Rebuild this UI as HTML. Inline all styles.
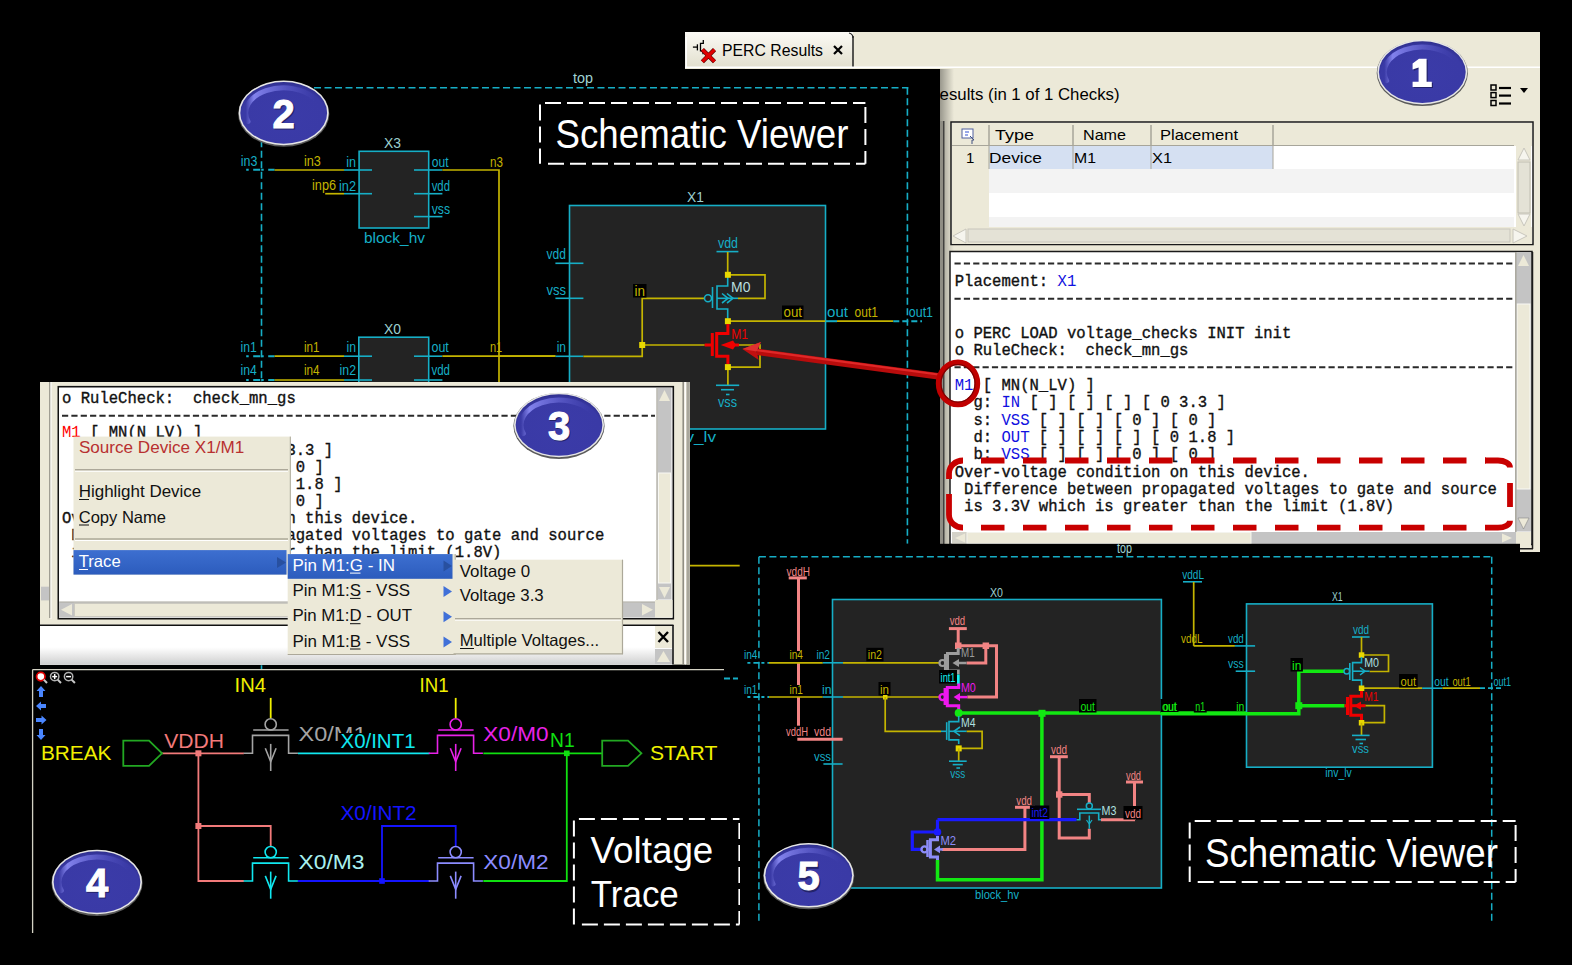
<!DOCTYPE html>
<html><head><meta charset="utf-8"><title>PERC</title>
<style>
html,body{margin:0;padding:0;background:#000;width:1572px;height:965px;overflow:hidden}
svg{display:block;font-family:'Liberation Sans',sans-serif}
</style></head><body>
<svg width="1572" height="965" viewBox="0 0 1572 965">
<defs>
<radialGradient id="bg1" cx="0.5" cy="0.55" r="0.6">
 <stop offset="0" stop-color="#3b3ba8"/><stop offset="0.8" stop-color="#3a3aa6"/><stop offset="1" stop-color="#26267a"/>
</radialGradient>
<linearGradient id="hlh" x1="0" y1="0" x2="1" y2="0">
 <stop offset="0" stop-color="#8a8af0" stop-opacity="0.0"/><stop offset="0.12" stop-color="#8a8af4" stop-opacity="0.9"/><stop offset="0.45" stop-color="#7c7ce8" stop-opacity="0.6"/><stop offset="1" stop-color="#6060d0" stop-opacity="0"/>
</linearGradient>
<linearGradient id="hl" x1="0" y1="0" x2="0" y2="1">
 <stop offset="0" stop-color="#9090ff" stop-opacity="0.9"/><stop offset="1" stop-color="#6a6ae0" stop-opacity="0"/>
</linearGradient>
<linearGradient id="shadowL" x1="0" y1="0" x2="1" y2="0">
 <stop offset="0" stop-color="#000" stop-opacity="0.35"/><stop offset="1" stop-color="#000" stop-opacity="0"/>
</linearGradient>
<linearGradient id="tabg" x1="0" y1="0" x2="0" y2="1">
 <stop offset="0" stop-color="#fbfaf5"/><stop offset="1" stop-color="#e2dfcd"/>
</linearGradient>
<linearGradient id="menuSel" x1="0" y1="0" x2="0" y2="1">
 <stop offset="0" stop-color="#3d6fd0"/><stop offset="1" stop-color="#2c5cbd"/>
</linearGradient>
</defs>
<rect x="0" y="0" width="1572" height="965" fill="#000"/>
<rect x="685" y="32" width="855" height="520" fill="#ece9d8"/>
<rect x="685" y="32" width="168" height="36" fill="url(#tabg)"/>
<line x1="853" y1="36" x2="853" y2="68" stroke="#222" stroke-width="1.5"/>
<path d="M849 33 Q853 34 853 38" stroke="#222" stroke-width="1.2" fill="none"/>
<line x1="685" y1="67.3" x2="1540" y2="67.3" stroke="#fff" stroke-width="1.5"/>
<line x1="692.9" y1="47.1" x2="697.4" y2="47.1" stroke="#000" stroke-width="1.3"/>
<line x1="697.4" y1="44.3" x2="697.4" y2="50.4" stroke="#000" stroke-width="1.3"/>
<polyline points="703.3,40.1 703.3,43.4 700.5,43.4 700.5,50.8 703,50.8 703,54.3" stroke="#000" stroke-width="1.3" fill="none"/>
<path d="M702.4 49.6 L714.5 61.7 M714.5 49.6 L702.4 61.7" stroke="#500" stroke-width="4.4" fill="none"/>
<path d="M702.4 49.6 L714.5 61.7 M714.5 49.6 L702.4 61.7" stroke="#e00000" stroke-width="3.2" fill="none"/>
<line x1="686.2" y1="37" x2="686.2" y2="68" stroke="#fff" stroke-width="1.5"/>
<text x="722" y="56" fill="#000" font-size="16" textLength="101" lengthAdjust="spacingAndGlyphs">PERC Results</text>
<path d="M834 46 L842 54 M842 46 L834 54" stroke="#000" stroke-width="2.2" fill="none"/>
<text x="927.5" y="100" fill="#000" font-size="16" textLength="192" lengthAdjust="spacingAndGlyphs">Results (in 1 of 1 Checks)</text>
<rect x="1491" y="85" width="5" height="5" fill="none" stroke="#000" stroke-width="1.5"/>
<line x1="1499" y1="88" x2="1511" y2="88" stroke="#000" stroke-width="2.2"/>
<rect x="1491" y="92.6" width="5" height="5" fill="none" stroke="#000" stroke-width="1.5"/>
<line x1="1499" y1="95.6" x2="1511" y2="95.6" stroke="#000" stroke-width="2.2"/>
<rect x="1491" y="100.5" width="5" height="5" fill="none" stroke="#000" stroke-width="1.5"/>
<line x1="1499" y1="103.5" x2="1511" y2="103.5" stroke="#000" stroke-width="2.2"/>
<path d="M1520 88 L1528 88 L1524 93 Z" stroke="none" stroke-width="1" fill="#000"/>
<rect x="940" y="69" width="14" height="483" fill="url(#shadowL)"/>
<linearGradient id="shadowT" x1="0" y1="1" x2="0" y2="0"><stop offset="0" stop-color="#000" stop-opacity="0.22"/><stop offset="1" stop-color="#000" stop-opacity="0"/></linearGradient>
<rect x="940" y="121" width="3.3" height="428" fill="#8f8d84"/>
<line x1="943.8" y1="121" x2="943.8" y2="549" stroke="#2a2a2a" stroke-width="1.2"/>
<rect x="951" y="122" width="582" height="122.5" fill="#fff" stroke="#1a1a1a" stroke-width="1.5"/>
<rect x="952" y="123" width="580" height="23" fill="#ece9d8"/>
<rect x="952" y="146" width="37" height="81" fill="#ece9d8"/>
<rect x="989" y="146" width="284" height="23" fill="#d5e0f2"/>
<rect x="989" y="169" width="525" height="24" fill="#f3f3f3"/>
<rect x="989" y="217" width="525" height="10" fill="#f3f3f3"/>
<line x1="989" y1="125" x2="989" y2="145" stroke="#a7a59a" stroke-width="1.5"/>
<line x1="989" y1="146" x2="989" y2="169" stroke="#a7a59a" stroke-width="1"/>
<line x1="1073" y1="125" x2="1073" y2="145" stroke="#a7a59a" stroke-width="1.5"/>
<line x1="1073" y1="146" x2="1073" y2="169" stroke="#a7a59a" stroke-width="1"/>
<line x1="1151" y1="125" x2="1151" y2="145" stroke="#a7a59a" stroke-width="1.5"/>
<line x1="1151" y1="146" x2="1151" y2="169" stroke="#a7a59a" stroke-width="1"/>
<line x1="1273" y1="125" x2="1273" y2="145" stroke="#a7a59a" stroke-width="1.5"/>
<line x1="1273" y1="146" x2="1273" y2="169" stroke="#a7a59a" stroke-width="1"/>
<line x1="952" y1="145.5" x2="1514" y2="145.5" stroke="#a7a59a" stroke-width="1"/>
<rect x="962" y="129" width="11" height="9" fill="#fff" stroke="#5060a0" stroke-width="1"/>
<path d="M965 132 l4 0 M965 135 l3 0" stroke="#3050d0" stroke-width="1" fill="none"/>
<path d="M970 136 l4 4 l-2 0 l0 4" stroke="#405080" stroke-width="1" fill="none"/>
<text x="995" y="140" fill="#000" font-size="15" textLength="39" lengthAdjust="spacingAndGlyphs">Type</text>
<text x="1083" y="140" fill="#000" font-size="15" textLength="43" lengthAdjust="spacingAndGlyphs">Name</text>
<text x="1160" y="140" fill="#000" font-size="15" textLength="78" lengthAdjust="spacingAndGlyphs">Placement</text>
<text x="966" y="163" fill="#000" font-size="15">1</text>
<text x="989" y="163" fill="#000" font-size="15" textLength="53" lengthAdjust="spacingAndGlyphs">Device</text>
<text x="1074" y="163" fill="#000" font-size="15" textLength="22" lengthAdjust="spacingAndGlyphs">M1</text>
<text x="1152" y="163" fill="#000" font-size="15" textLength="20" lengthAdjust="spacingAndGlyphs">X1</text>
<rect x="1516" y="146" width="15" height="81" fill="#ece9d8"/>
<path d="M1518 160 L1524 148 L1530 160 Z" stroke="#c8c6bc" stroke-width="1" fill="#f6f5ee"/>
<rect x="1518" y="162" width="12" height="51" fill="#e4e2d6" stroke="#c0beb2" stroke-width="1"/>
<path d="M1518 214 L1524 226 L1530 214 Z" stroke="#c8c6bc" stroke-width="1" fill="#f6f5ee"/>
<rect x="952" y="227" width="580" height="17" fill="#ece9d8"/>
<path d="M953 236 L966 229 L966 243 Z" stroke="#c8c6bc" stroke-width="1" fill="#f6f5ee"/>
<rect x="968" y="229" width="542" height="13" fill="#e4e2d6" stroke="#c8c6bc" stroke-width="1"/>
<path d="M1513 229 L1527 236 L1513 243 Z" stroke="#c8c6bc" stroke-width="1" fill="#f6f5ee"/>
<rect x="950" y="251.5" width="582" height="293" fill="#fff" stroke="#1a1a1a" stroke-width="1.5"/>
<rect x="952" y="253" width="564" height="279" fill="#fff"/>
<line x1="954.5" y1="263.5" x2="1514" y2="263.5" stroke="#2a2a2a" stroke-width="1.9" stroke-dasharray="6.2 3.15"/>
<text x="954.7" y="286" fill="#111" font-size="15.6" font-family="'Liberation Mono', monospace" textLength="121.55" lengthAdjust="spacingAndGlyphs" xml:space="preserve" stroke="#111" stroke-width="0.35">Placement: X1</text>
<rect x="1057.55" y="274" width="18.7" height="15" fill="#fff"/>
<text x="1057.55" y="286" fill="#1010e0" font-size="15.6" font-family="'Liberation Mono', monospace" textLength="18.7" lengthAdjust="spacingAndGlyphs">X1</text>
<line x1="954.5" y1="298.8" x2="1514" y2="298.8" stroke="#2a2a2a" stroke-width="1.9" stroke-dasharray="6.2 3.15"/>
<text x="954.7" y="338.3" fill="#111" font-size="15.6" font-family="'Liberation Mono', monospace" textLength="336.6" lengthAdjust="spacingAndGlyphs" xml:space="preserve" stroke="#111" stroke-width="0.35">o PERC LOAD voltage_checks INIT init</text>
<text x="954.7" y="355.4" fill="#111" font-size="15.6" font-family="'Liberation Mono', monospace" textLength="233.75" lengthAdjust="spacingAndGlyphs" xml:space="preserve" stroke="#111" stroke-width="0.35">o RuleCheck:  check_mn_gs</text>
<line x1="954.5" y1="367.3" x2="1514" y2="367.3" stroke="#2a2a2a" stroke-width="1.9" stroke-dasharray="6.2 3.15"/>
<text x="954.7" y="389.7" fill="#111" font-size="15.6" font-family="'Liberation Mono', monospace" textLength="140.25" lengthAdjust="spacingAndGlyphs" xml:space="preserve" stroke="#111" stroke-width="0.35">M1 [ MN(N_LV) ]</text>
<rect x="954.7" y="377.7" width="18.7" height="15" fill="#fff"/>
<text x="954.7" y="389.7" fill="#1010e0" font-size="15.6" font-family="'Liberation Mono', monospace" textLength="18.7" lengthAdjust="spacingAndGlyphs">M1</text>
<text x="954.7" y="407.4" fill="#111" font-size="15.6" font-family="'Liberation Mono', monospace" textLength="271.15" lengthAdjust="spacingAndGlyphs" xml:space="preserve" stroke="#111" stroke-width="0.35">  g: IN [ ] [ ] [ ] [ 0 3.3 ]</text>
<rect x="1001.45" y="395.4" width="18.7" height="15" fill="#fff"/>
<text x="1001.45" y="407.4" fill="#1010e0" font-size="15.6" font-family="'Liberation Mono', monospace" textLength="18.7" lengthAdjust="spacingAndGlyphs">IN</text>
<text x="954.7" y="425" fill="#111" font-size="15.6" font-family="'Liberation Mono', monospace" textLength="261.8" lengthAdjust="spacingAndGlyphs" xml:space="preserve" stroke="#111" stroke-width="0.35">  s: VSS [ ] [ ] [ 0 ] [ 0 ]</text>
<rect x="1001.45" y="413" width="28.049999999999997" height="15" fill="#fff"/>
<text x="1001.45" y="425" fill="#1010e0" font-size="15.6" font-family="'Liberation Mono', monospace" textLength="28.05" lengthAdjust="spacingAndGlyphs">VSS</text>
<text x="954.7" y="441.8" fill="#111" font-size="15.6" font-family="'Liberation Mono', monospace" textLength="280.5" lengthAdjust="spacingAndGlyphs" xml:space="preserve" stroke="#111" stroke-width="0.35">  d: OUT [ ] [ ] [ ] [ 0 1.8 ]</text>
<rect x="1001.45" y="429.8" width="28.049999999999997" height="15" fill="#fff"/>
<text x="1001.45" y="441.8" fill="#1010e0" font-size="15.6" font-family="'Liberation Mono', monospace" textLength="28.05" lengthAdjust="spacingAndGlyphs">OUT</text>
<text x="954.7" y="458.8" fill="#111" font-size="15.6" font-family="'Liberation Mono', monospace" textLength="261.8" lengthAdjust="spacingAndGlyphs" xml:space="preserve" stroke="#111" stroke-width="0.35">  b: VSS [ ] [ ] [ 0 ] [ 0 ]</text>
<rect x="1001.45" y="446.8" width="28.049999999999997" height="15" fill="#fff"/>
<text x="1001.45" y="458.8" fill="#1010e0" font-size="15.6" font-family="'Liberation Mono', monospace" textLength="28.05" lengthAdjust="spacingAndGlyphs">VSS</text>
<text x="954.7" y="476.5" fill="#111" font-size="15.6" font-family="'Liberation Mono', monospace" textLength="355.3" lengthAdjust="spacingAndGlyphs" xml:space="preserve" stroke="#111" stroke-width="0.35">Over-voltage condition on this device.</text>
<text x="954.7" y="494" fill="#111" font-size="15.6" font-family="'Liberation Mono', monospace" textLength="542.3" lengthAdjust="spacingAndGlyphs" xml:space="preserve" stroke="#111" stroke-width="0.35"> Difference between propagated voltages to gate and source</text>
<text x="954.7" y="511" fill="#111" font-size="15.6" font-family="'Liberation Mono', monospace" textLength="439.45" lengthAdjust="spacingAndGlyphs" xml:space="preserve" stroke="#111" stroke-width="0.35"> is 3.3V which is greater than the limit (1.8V)</text>
<rect x="1516" y="252.5" width="15" height="279" fill="#c4c4c4"/>
<rect x="1517" y="304" width="13" height="185" fill="#ece9d8" stroke="#f8f8f4" stroke-width="1"/>
<path d="M1518 266 L1523.5 255 L1529 266 Z" stroke="none" stroke-width="1" fill="#ece9d8"/>
<path d="M1518 518 L1523.5 529 L1529 518 Z" stroke="#888" stroke-width="0.6" fill="#ece9d8"/>
<line x1="1515.8" y1="252" x2="1515.8" y2="532" stroke="#a8a69c" stroke-width="1.5"/>
<rect x="952" y="532" width="564" height="12" fill="#c4c4c4"/>
<rect x="952" y="532" width="15" height="12" fill="#d4d2c8"/>
<path d="M965 533.5 L955 538 L965 542.5 Z" stroke="none" stroke-width="1" fill="#ece9d8"/>
<rect x="967" y="532.5" width="284" height="11" fill="#ece9d8" stroke="#f4f4ee" stroke-width="1"/>
<path d="M1502 533.5 L1512 538 L1502 542.5 Z" stroke="none" stroke-width="1" fill="#ece9d8"/>
<rect x="1516" y="532" width="15" height="16" fill="#ece9d8"/>
<line x1="1532.5" y1="252" x2="1532.5" y2="549" stroke="#1a1a1a" stroke-width="1.5"/>
<line x1="950" y1="548.8" x2="1533" y2="548.8" stroke="#1a1a1a" stroke-width="1.5"/>
<rect x="0" y="69" width="940" height="483" fill="#000"/>
<text x="573" y="83" fill="#9fd3d3" font-size="14" textLength="20" lengthAdjust="spacingAndGlyphs">top</text>
<line x1="261.5" y1="87.8" x2="908.4" y2="87.8" stroke="#16aec6" stroke-width="1.6" stroke-dasharray="7 3.5"/>
<line x1="261.5" y1="87.8" x2="261.5" y2="669" stroke="#16aec6" stroke-width="1.6" stroke-dasharray="7 3.5"/>
<line x1="907.4" y1="87.8" x2="907.4" y2="543.7" stroke="#16aec6" stroke-width="1.6" stroke-dasharray="7 3.5"/>
<rect x="359.1" y="151.3" width="69.6" height="76.7" fill="#232323" stroke="#16aec6" stroke-width="1.6"/>
<text x="384" y="147.7" fill="#9cd0d0" font-size="14" textLength="17" lengthAdjust="spacingAndGlyphs">X3</text>
<text x="364" y="242.5" fill="#16aec6" font-size="14" textLength="61" lengthAdjust="spacingAndGlyphs">block_hv</text>
<line x1="344" y1="170" x2="372" y2="170" stroke="#16aec6" stroke-width="1.6"/>
<line x1="344" y1="193.7" x2="372" y2="193.7" stroke="#16aec6" stroke-width="1.6"/>
<line x1="414" y1="170" x2="442.4" y2="170" stroke="#16aec6" stroke-width="1.6"/>
<line x1="414" y1="193.7" x2="442.4" y2="193.7" stroke="#16aec6" stroke-width="1.6"/>
<line x1="414" y1="216.6" x2="442.4" y2="216.6" stroke="#16aec6" stroke-width="1.6"/>
<text x="346.2" y="167.1" fill="#16aec6" font-size="14" textLength="9.8" lengthAdjust="spacingAndGlyphs">in</text>
<text x="339" y="191" fill="#16aec6" font-size="14" textLength="17" lengthAdjust="spacingAndGlyphs">in2</text>
<text x="431.7" y="167.1" fill="#16aec6" font-size="14" textLength="16.8" lengthAdjust="spacingAndGlyphs">out</text>
<text x="431.7" y="191" fill="#16aec6" font-size="14" textLength="18.3" lengthAdjust="spacingAndGlyphs">vdd</text>
<text x="431.7" y="213.7" fill="#16aec6" font-size="14" textLength="18.3" lengthAdjust="spacingAndGlyphs">vss</text>
<text x="240.8" y="165.7" fill="#16aec6" font-size="14" textLength="16.6" lengthAdjust="spacingAndGlyphs">in3</text>
<line x1="246.2" y1="169.8" x2="274.6" y2="169.8" stroke="#16aec6" stroke-width="2" stroke-dasharray="2.5 4.5 7 1"/>
<line x1="274.6" y1="170" x2="344" y2="170" stroke="#c4b400" stroke-width="1.7"/>
<text x="303.9" y="166" fill="#c4b400" font-size="14" textLength="16.9" lengthAdjust="spacingAndGlyphs">in3</text>
<text x="312" y="190.3" fill="#c4b400" font-size="14" textLength="24" lengthAdjust="spacingAndGlyphs">inp6</text>
<line x1="325.2" y1="193.7" x2="344" y2="193.7" stroke="#c4b400" stroke-width="1.7"/>
<polyline points="442.4,170 499,170 499,400" stroke="#c4b400" stroke-width="1.7" fill="none"/>
<text x="490" y="167" fill="#c4b400" font-size="14" textLength="12.9" lengthAdjust="spacingAndGlyphs">n3</text>
<rect x="358.8" y="337.2" width="69.9" height="80" fill="#232323" stroke="#16aec6" stroke-width="1.6"/>
<text x="384" y="334" fill="#9cd0d0" font-size="14" textLength="17" lengthAdjust="spacingAndGlyphs">X0</text>
<text x="240.5" y="351.9" fill="#16aec6" font-size="14" textLength="16.3" lengthAdjust="spacingAndGlyphs">in1</text>
<text x="240.5" y="375" fill="#16aec6" font-size="14" textLength="16.3" lengthAdjust="spacingAndGlyphs">in4</text>
<line x1="246.2" y1="356.2" x2="274.6" y2="356.2" stroke="#16aec6" stroke-width="2" stroke-dasharray="2.5 4.5 7 1"/>
<line x1="274.6" y1="356.2" x2="344" y2="356.2" stroke="#c4b400" stroke-width="1.7"/>
<line x1="344" y1="356.2" x2="372" y2="356.2" stroke="#16aec6" stroke-width="1.6"/>
<line x1="414" y1="356.2" x2="442.4" y2="356.2" stroke="#16aec6" stroke-width="1.6"/>
<line x1="246.2" y1="380" x2="274.6" y2="380" stroke="#16aec6" stroke-width="2" stroke-dasharray="2.5 4.5 7 1"/>
<line x1="274.6" y1="380" x2="344" y2="380" stroke="#c4b400" stroke-width="1.7"/>
<line x1="344" y1="380" x2="372" y2="380" stroke="#16aec6" stroke-width="1.6"/>
<line x1="414" y1="380" x2="442.4" y2="380" stroke="#16aec6" stroke-width="1.6"/>
<text x="303.9" y="351.9" fill="#c4b400" font-size="14" textLength="15.6" lengthAdjust="spacingAndGlyphs">in1</text>
<text x="303.9" y="375" fill="#c4b400" font-size="14" textLength="15.6" lengthAdjust="spacingAndGlyphs">in4</text>
<text x="346.5" y="351.9" fill="#16aec6" font-size="14" textLength="9.5" lengthAdjust="spacingAndGlyphs">in</text>
<text x="339.6" y="375" fill="#16aec6" font-size="14" textLength="16.4" lengthAdjust="spacingAndGlyphs">in2</text>
<text x="431.5" y="351.9" fill="#16aec6" font-size="14" textLength="17.3" lengthAdjust="spacingAndGlyphs">out</text>
<text x="431.5" y="375" fill="#16aec6" font-size="14" textLength="18.5" lengthAdjust="spacingAndGlyphs">vdd</text>
<text x="489.9" y="351.9" fill="#c4b400" font-size="14" textLength="12.3" lengthAdjust="spacingAndGlyphs">n1</text>
<line x1="442.4" y1="356.2" x2="555.4" y2="356.2" stroke="#c4b400" stroke-width="1.7"/>
<line x1="690" y1="565.7" x2="739.7" y2="565.7" stroke="#c4b400" stroke-width="1.7"/>
<line x1="724" y1="678.6" x2="738" y2="678.6" stroke="#16aec6" stroke-width="2" stroke-dasharray="6 3"/>
<line x1="545" y1="103" x2="865.4" y2="103" stroke="#fff" stroke-width="2" stroke-dasharray="16 6"/>
<line x1="540" y1="104.5" x2="540" y2="163.8" stroke="#fff" stroke-width="2" stroke-dasharray="16 6"/>
<line x1="548" y1="163.8" x2="865.4" y2="163.8" stroke="#fff" stroke-width="2" stroke-dasharray="16 6"/>
<line x1="865.4" y1="107" x2="865.4" y2="163.8" stroke="#fff" stroke-width="2" stroke-dasharray="16 6"/>
<text x="555.5" y="148.3" fill="#fff" font-size="40" textLength="293" lengthAdjust="spacingAndGlyphs">Schematic Viewer</text>
<rect x="569.5" y="205.5" width="256" height="223.5" fill="#232323" stroke="#16aec6" stroke-width="1.6"/>
<text x="687" y="201.6" fill="#9cd0d0" font-size="14" textLength="16.8" lengthAdjust="spacingAndGlyphs">X1</text>
<text x="546.6" y="259.3" fill="#16aec6" font-size="14" textLength="19.4" lengthAdjust="spacingAndGlyphs">vdd</text>
<text x="546.6" y="294.8" fill="#16aec6" font-size="14" textLength="19.4" lengthAdjust="spacingAndGlyphs">vss</text>
<text x="556.7" y="352.3" fill="#16aec6" font-size="14" textLength="9.3" lengthAdjust="spacingAndGlyphs">in</text>
<line x1="555.4" y1="263.3" x2="583.4" y2="263.3" stroke="#16aec6" stroke-width="1.6"/>
<line x1="555.4" y1="298.3" x2="583.4" y2="298.3" stroke="#16aec6" stroke-width="1.6"/>
<line x1="555.4" y1="356.3" x2="583.4" y2="356.3" stroke="#16aec6" stroke-width="1.6"/>
<line x1="500" y1="356.2" x2="555.4" y2="356.2" stroke="#c4b400" stroke-width="1.7"/>
<polyline points="583.4,356.3 642.2,356.3 642.2,298.3 705,298.3" stroke="#c4b400" stroke-width="1.7" fill="none"/>
<line x1="642.2" y1="345" x2="704.7" y2="345" stroke="#c4b400" stroke-width="1.7"/>
<rect x="639.2" y="342" width="6" height="6" fill="#e8d800"/>
<rect x="633.0" y="284.0" width="13.5" height="13.5" fill="#000"/>
<text x="634.5" y="295.5" fill="#c4b400" font-size="14" textLength="10.5" lengthAdjust="spacingAndGlyphs">in</text>
<text x="718" y="247.5" fill="#16aec6" font-size="14" textLength="20" lengthAdjust="spacingAndGlyphs">vdd</text>
<line x1="716.5" y1="251.6" x2="738.4" y2="251.6" stroke="#16aec6" stroke-width="1.6"/>
<line x1="727.7" y1="252" x2="727.7" y2="275" stroke="#c4b400" stroke-width="1.7"/>
<polyline points="727.7,274.8 765,274.8 765,298.3 738,298.3" stroke="#c4b400" stroke-width="1.7" fill="none"/>
<polyline points="727.7,276 727.7,286 717,286 717,309 727.7,309 727.7,319" stroke="#16aec6" stroke-width="1.6" fill="none"/>
<line x1="712.5" y1="287" x2="712.5" y2="308" stroke="#16aec6" stroke-width="1.6"/>
<circle cx="708" cy="298.3" r="3.5" fill="none" stroke="#16aec6" stroke-width="1.6"/>
<line x1="717" y1="298.3" x2="738" y2="298.3" stroke="#16aec6" stroke-width="1.6"/>
<polyline points="722,293.5 728,298.3 722,303" stroke="#16aec6" stroke-width="1.6" fill="none"/>
<polyline points="727,293.5 733,298.3 727,303" stroke="#16aec6" stroke-width="1.6" fill="none"/>
<text x="731" y="292.2" fill="#b8dede" font-size="14" textLength="19.4" lengthAdjust="spacingAndGlyphs">M0</text>
<rect x="724.9" y="271.8" width="6" height="6" fill="#e8d800"/>
<line x1="727.7" y1="321.2" x2="825.5" y2="321.2" stroke="#c4b400" stroke-width="1.7"/>
<line x1="825.5" y1="321.2" x2="837" y2="321.2" stroke="#16aec6" stroke-width="2"/>
<line x1="837" y1="321.2" x2="893.3" y2="321.2" stroke="#c4b400" stroke-width="1.7"/>
<line x1="893.3" y1="321.2" x2="922" y2="321.2" stroke="#16aec6" stroke-width="2" stroke-dasharray="6 3"/>
<rect x="724.9" y="318.2" width="6" height="6" fill="#e8d800"/>
<rect x="782.0" y="305.5" width="21.5" height="13.5" fill="#000"/>
<text x="783.5" y="317" fill="#c4b400" font-size="14" textLength="18.5" lengthAdjust="spacingAndGlyphs">out</text>
<text x="827" y="317" fill="#16aec6" font-size="14" textLength="21" lengthAdjust="spacingAndGlyphs">out</text>
<text x="854.6" y="317" fill="#c4b400" font-size="14" textLength="23.4" lengthAdjust="spacingAndGlyphs">out1</text>
<text x="908.8" y="317" fill="#16aec6" font-size="14" textLength="24.2" lengthAdjust="spacingAndGlyphs">out1</text>
<polyline points="727.9,324 727.9,333.5 716.7,333.5 716.7,356.3 727.9,356.3 727.9,364" stroke="#f00000" stroke-width="3" fill="none"/>
<line x1="712.3" y1="333" x2="712.3" y2="356" stroke="#f00000" stroke-width="3"/>
<line x1="704.7" y1="345" x2="712" y2="345" stroke="#f00000" stroke-width="3"/>
<line x1="728" y1="345" x2="739" y2="345" stroke="#f00000" stroke-width="3"/>
<path d="M720.7 345 L733 340.5 L736 345 L733 349.5 Z" stroke="none" stroke-width="1" fill="#f00000"/>
<polyline points="739,345 760,345 760,367.1 727.9,367.1" stroke="#c4b400" stroke-width="1.7" fill="none"/>
<rect x="724.9" y="364.1" width="6" height="6" fill="#e8d800"/>
<text x="731.2" y="339.2" fill="#f00000" font-size="14" textLength="16.7" lengthAdjust="spacingAndGlyphs">M1</text>
<line x1="727.9" y1="370" x2="727.9" y2="385.3" stroke="#c4b400" stroke-width="1.7"/>
<line x1="716" y1="385.3" x2="739.2" y2="385.3" stroke="#16aec6" stroke-width="1.6"/>
<line x1="721" y1="389.7" x2="734" y2="389.7" stroke="#16aec6" stroke-width="1.6"/>
<line x1="726" y1="394.5" x2="729.5" y2="394.5" stroke="#16aec6" stroke-width="1.6"/>
<text x="718" y="407" fill="#16aec6" font-size="14" textLength="19" lengthAdjust="spacingAndGlyphs">vss</text>
<text x="672" y="441.8" fill="#16aec6" font-size="14" textLength="44" lengthAdjust="spacingAndGlyphs">inv_lv</text>
<rect x="40" y="382" width="650" height="282.6" fill="#ece9d8"/>
<line x1="49.8" y1="382" x2="49.8" y2="618" stroke="#9d9b90" stroke-width="1.5"/>
<rect x="41" y="586.7" width="8" height="13.7" fill="#c4c4c4"/>
<line x1="51" y1="382" x2="51" y2="619" stroke="#fff" stroke-width="1"/>
<rect x="58.3" y="386.7" width="615" height="232" fill="#fff" stroke="#111" stroke-width="1.6"/>
<rect x="59.2" y="388" width="598" height="214" fill="#fff"/>
<rect x="657.5" y="388" width="14" height="211.5" fill="#c4c4c4"/>
<rect x="658.5" y="473" width="12" height="110" fill="#ece9d8" stroke="#f8f8f4" stroke-width="1"/>
<path d="M659 401 L664.5 390 L670 401 Z" stroke="none" stroke-width="1" fill="#ece9d8"/>
<path d="M659 587 L664.5 598 L670 587 Z" stroke="none" stroke-width="1" fill="#ece9d8"/>
<line x1="657" y1="388" x2="657" y2="602" stroke="#a8a69c" stroke-width="1.2"/>
<rect x="59.2" y="602.3" width="598" height="15" fill="#c4c4c4"/>
<rect x="59.2" y="602.3" width="14.5" height="15" fill="#c4c4c4"/>
<path d="M72 604 L61 609.8 L72 615.5 Z" stroke="none" stroke-width="1" fill="#ece9d8"/>
<rect x="74.5" y="603.5" width="526" height="13" fill="#ece9d8" stroke="#c8c6bc" stroke-width="0.8"/>
<rect x="640.8" y="602.3" width="14" height="15" fill="#c4c4c4"/>
<path d="M642 604 L653 609.8 L642 615.5 Z" stroke="none" stroke-width="1" fill="#ece9d8"/>
<line x1="59.2" y1="602" x2="657" y2="602" stroke="#a8a69c" stroke-width="1.2"/>
<rect x="655" y="600" width="17.5" height="17.5" fill="#ece9d8"/>
<line x1="683.2" y1="382" x2="683.2" y2="664.6" stroke="#8c8a80" stroke-width="1.5"/>
<line x1="685.3" y1="382" x2="685.3" y2="664.6" stroke="#fff" stroke-width="1.2"/>
<rect x="686.5" y="382" width="3.3" height="282.6" fill="#a9a79c"/>
<rect x="40" y="624.7" width="633.5" height="40" fill="#fff"/>
<linearGradient id="lowg" x1="0" y1="0" x2="0" y2="1"><stop offset="0.55" stop-color="#fff"/><stop offset="1" stop-color="#cfcfcf"/></linearGradient>
<rect x="40" y="626" width="633" height="38.6" fill="url(#lowg)"/>
<line x1="40" y1="625.3" x2="673.5" y2="625.3" stroke="#111" stroke-width="1.6"/>
<line x1="673" y1="625" x2="673" y2="664.6" stroke="#111" stroke-width="1.6"/>
<rect x="655" y="626" width="17" height="22" fill="#ece9d8"/>
<path d="M658.5 632 L668 642 M668 632 L658.5 642" stroke="#000" stroke-width="2.4" fill="none"/>
<rect x="655" y="649" width="17" height="15" fill="#c4c4c4"/>
<path d="M657 662 L663.5 651 L670 662 Z" stroke="none" stroke-width="1" fill="#ece9d8"/>
<text x="62" y="402.7" fill="#111" font-size="15.6" font-family="'Liberation Mono', monospace" textLength="233.75" lengthAdjust="spacingAndGlyphs" xml:space="preserve" stroke="#111" stroke-width="0.35">o RuleCheck:  check_mn_gs</text>
<line x1="62" y1="415.7" x2="655" y2="415.7" stroke="#2a2a2a" stroke-width="1.9" stroke-dasharray="6.2 3.15"/>
<text x="62" y="437.3" fill="#111" font-size="15.6" font-family="'Liberation Mono', monospace" textLength="140.25" lengthAdjust="spacingAndGlyphs" xml:space="preserve" stroke="#111" stroke-width="0.35">M1 [ MN(N_LV) ]</text>
<rect x="62.0" y="425.3" width="18.7" height="15" fill="#fff"/>
<text x="62.0" y="437.3" fill="#ff0000" font-size="15.6" font-family="'Liberation Mono', monospace" textLength="18.7" lengthAdjust="spacingAndGlyphs">M1</text>
<text x="62" y="454.6" fill="#111" font-size="15.6" font-family="'Liberation Mono', monospace" textLength="271.15" lengthAdjust="spacingAndGlyphs" xml:space="preserve" stroke="#111" stroke-width="0.35">  g: IN [ ] [ ] [ ] [ 0 3.3 ]</text>
<rect x="108.75" y="442.6" width="18.7" height="15" fill="#fff"/>
<text x="108.75" y="454.6" fill="#1010e0" font-size="15.6" font-family="'Liberation Mono', monospace" textLength="18.7" lengthAdjust="spacingAndGlyphs">IN</text>
<text x="62" y="471.7" fill="#111" font-size="15.6" font-family="'Liberation Mono', monospace" textLength="261.8" lengthAdjust="spacingAndGlyphs" xml:space="preserve" stroke="#111" stroke-width="0.35">  s: VSS [ ] [ ] [ 0 ] [ 0 ]</text>
<text x="62" y="488.8" fill="#111" font-size="15.6" font-family="'Liberation Mono', monospace" textLength="280.5" lengthAdjust="spacingAndGlyphs" xml:space="preserve" stroke="#111" stroke-width="0.35">  d: OUT [ ] [ ] [ ] [ 0 1.8 ]</text>
<text x="62" y="505.9" fill="#111" font-size="15.6" font-family="'Liberation Mono', monospace" textLength="261.8" lengthAdjust="spacingAndGlyphs" xml:space="preserve" stroke="#111" stroke-width="0.35">  b: VSS [ ] [ ] [ 0 ] [ 0 ]</text>
<text x="62" y="523" fill="#111" font-size="15.6" font-family="'Liberation Mono', monospace" textLength="355.3" lengthAdjust="spacingAndGlyphs" xml:space="preserve" stroke="#111" stroke-width="0.35">Over-voltage condition on this device.</text>
<text x="62" y="540" fill="#111" font-size="15.6" font-family="'Liberation Mono', monospace" textLength="542.3" lengthAdjust="spacingAndGlyphs" xml:space="preserve" stroke="#111" stroke-width="0.35"> Difference between propagated voltages to gate and source</text>
<text x="62" y="557" fill="#111" font-size="15.6" font-family="'Liberation Mono', monospace" textLength="439.45" lengthAdjust="spacingAndGlyphs" xml:space="preserve" stroke="#111" stroke-width="0.35"> is 3.3V which is greater than the limit (1.8V)</text>
<rect x="73.5" y="436.6" width="217.3" height="138" fill="#ece9d8"/>
<line x1="290.3" y1="436.6" x2="290.3" y2="574.6" stroke="#aca899" stroke-width="1"/>
<text x="78.9" y="452.9" fill="#b83030" font-size="16.5" textLength="165.3" lengthAdjust="spacingAndGlyphs">Source Device X1/M1</text>
<line x1="75" y1="469.8" x2="288" y2="469.8" stroke="#aca899" stroke-width="1.5"/>
<line x1="75" y1="471.3" x2="288" y2="471.3" stroke="#fff" stroke-width="1"/>
<text x="78.7" y="497.1" fill="#111" font-size="16.5" textLength="122.6" lengthAdjust="spacingAndGlyphs">Highlight Device</text>
<line x1="79" y1="499.5" x2="89" y2="499.5" stroke="#111" stroke-width="1"/>
<text x="78.7" y="522.5" fill="#111" font-size="16.5" textLength="87.3" lengthAdjust="spacingAndGlyphs">Copy Name</text>
<line x1="79" y1="525" x2="89" y2="525" stroke="#111" stroke-width="1"/>
<line x1="75" y1="539" x2="288" y2="539" stroke="#aca899" stroke-width="1.5"/>
<line x1="75" y1="540.5" x2="288" y2="540.5" stroke="#fff" stroke-width="1"/>
<rect x="73.5" y="550.1" width="213" height="24.5" fill="url(#menuSel)"/>
<text x="78.7" y="567" fill="#fff" font-size="16.5" textLength="42" lengthAdjust="spacingAndGlyphs">Trace</text>
<line x1="79" y1="569.5" x2="88" y2="569.5" stroke="#fff" stroke-width="1"/>
<path d="M277 557 L286 562.5 L277 568 Z" stroke="none" stroke-width="1" fill="#2850a0"/>
<rect x="287.7" y="554.1" width="167.9" height="100.9" fill="#ece9d8"/>
<line x1="455.2" y1="554.1" x2="455.2" y2="655" stroke="#aca899" stroke-width="1"/>
<line x1="287.7" y1="654.5" x2="455.6" y2="654.5" stroke="#aca899" stroke-width="1.2"/>
<rect x="287.7" y="554.1" width="164.8" height="24.7" fill="url(#menuSel)"/>
<text x="292.4" y="570.6" fill="#fff" font-size="16.5" textLength="102.6" lengthAdjust="spacingAndGlyphs">Pin M1:G - IN</text>
<line x1="350" y1="573.1" x2="360.5" y2="573.1" stroke="#fff" stroke-width="1"/>
<path d="M443.5 560.6 L452 566.1 L443.5 571.6 Z" stroke="none" stroke-width="1" fill="#2850a0"/>
<text x="292.4" y="595.9" fill="#111" font-size="16.5" textLength="117.6" lengthAdjust="spacingAndGlyphs">Pin M1:S - VSS</text>
<line x1="350" y1="598.4" x2="360.5" y2="598.4" stroke="#111" stroke-width="1"/>
<path d="M443.5 585.9 L452 591.4 L443.5 596.9 Z" stroke="none" stroke-width="1" fill="#4070d8"/>
<text x="292.4" y="621.2" fill="#111" font-size="16.5" textLength="119.6" lengthAdjust="spacingAndGlyphs">Pin M1:D - OUT</text>
<line x1="350" y1="623.7" x2="360.5" y2="623.7" stroke="#111" stroke-width="1"/>
<path d="M443.5 611.2 L452 616.7 L443.5 622.2 Z" stroke="none" stroke-width="1" fill="#4070d8"/>
<text x="292.4" y="646.5" fill="#111" font-size="16.5" textLength="117.6" lengthAdjust="spacingAndGlyphs">Pin M1:B - VSS</text>
<line x1="350" y1="649.0" x2="360.5" y2="649.0" stroke="#111" stroke-width="1"/>
<path d="M443.5 636.5 L452 642.0 L443.5 647.5 Z" stroke="none" stroke-width="1" fill="#4070d8"/>
<rect x="453.5" y="559.7" width="169.4" height="94.5" fill="#ece9d8"/>
<line x1="622.5" y1="559.7" x2="622.5" y2="654.2" stroke="#aca899" stroke-width="1.2"/>
<line x1="453.5" y1="653.8" x2="622.9" y2="653.8" stroke="#aca899" stroke-width="1.2"/>
<text x="459.7" y="576.5" fill="#111" font-size="16.5" textLength="70.5" lengthAdjust="spacingAndGlyphs">Voltage 0</text>
<text x="459.7" y="601.3" fill="#111" font-size="16.5" textLength="84" lengthAdjust="spacingAndGlyphs">Voltage 3.3</text>
<line x1="455" y1="618.7" x2="621" y2="618.7" stroke="#aca899" stroke-width="1.5"/>
<line x1="455" y1="620.2" x2="621" y2="620.2" stroke="#fff" stroke-width="1"/>
<text x="459.7" y="645.8" fill="#111" font-size="16.5" textLength="139.5" lengthAdjust="spacingAndGlyphs">Multiple Voltages...</text>
<line x1="460" y1="648.5" x2="474" y2="648.5" stroke="#111" stroke-width="1"/>
<line x1="32.6" y1="669.6" x2="724" y2="669.6" stroke="#d4d2c4" stroke-width="1.3"/>
<line x1="32.6" y1="669.6" x2="32.6" y2="933" stroke="#d4d2c4" stroke-width="1.3"/>
<circle cx="40.8" cy="676.6" r="4.2" fill="#fff" stroke="#e00000" stroke-width="1.8"/>
<line x1="43.8" y1="679.6" x2="47" y2="683" stroke="#c8c8c8" stroke-width="2"/>
<circle cx="54.7" cy="676.6" r="4.2" fill="none" stroke="#b0b0b0" stroke-width="1.5"/>
<line x1="57.7" y1="679.6" x2="61.0" y2="683" stroke="#c8c8c8" stroke-width="2"/>
<line x1="52.2" y1="676.6" x2="57.2" y2="676.6" stroke="#fff" stroke-width="1.5"/>
<line x1="54.7" y1="674" x2="54.7" y2="679.2" stroke="#fff" stroke-width="1.5"/>
<circle cx="68.6" cy="676.6" r="4.2" fill="none" stroke="#b0b0b0" stroke-width="1.5"/>
<line x1="71.6" y1="679.6" x2="74.89999999999999" y2="683" stroke="#c8c8c8" stroke-width="2"/>
<line x1="66.1" y1="676.6" x2="71.1" y2="676.6" stroke="#fff" stroke-width="1.5"/>
<path d="M41 686 L45.5 691 L43 691 L43 697 L39 697 L39 691 L36.5 691 Z" stroke="none" stroke-width="1" fill="#4a86ff"/>
<path d="M36 706 L41 701.5 L41 704 L46 704 L46 708 L41 708 L41 710.5 Z" stroke="none" stroke-width="1" fill="#4a86ff"/>
<path d="M46.5 720 L41.5 715.5 L41.5 718 L36 718 L36 722 L41.5 722 L41.5 724.5 Z" stroke="none" stroke-width="1" fill="#4a86ff"/>
<path d="M41 740 L45.5 735 L43 735 L43 729 L39 729 L39 735 L36.5 735 Z" stroke="none" stroke-width="1" fill="#4a86ff"/>
<line x1="162" y1="753.3" x2="243.9" y2="753.3" stroke="#f27a7a" stroke-width="1.8"/>
<polyline points="198.4,753.3 198.4,881 243.9,881" stroke="#f27a7a" stroke-width="1.8" fill="none"/>
<polyline points="198.4,826 270.7,826 270.7,846.8" stroke="#f27a7a" stroke-width="1.8" fill="none"/>
<rect x="195.4" y="750.3" width="6" height="6" fill="#f27a7a"/>
<rect x="195.4" y="823" width="6" height="6" fill="#f27a7a"/>
<line x1="297.9" y1="753.3" x2="429.6" y2="753.3" stroke="#10e8f0" stroke-width="1.8"/>
<line x1="483.3" y1="753.3" x2="602.2" y2="753.3" stroke="#10e010" stroke-width="1.8"/>
<polyline points="566.8,753.3 566.8,881 483.3,881" stroke="#10e010" stroke-width="1.8" fill="none"/>
<rect x="564" y="750.5" width="5.6" height="5.6" fill="#10e010"/>
<line x1="297.9" y1="881" x2="429.6" y2="881" stroke="#1414ff" stroke-width="1.8"/>
<polyline points="382,881 382,826 455.7,826 455.7,846.8" stroke="#1414ff" stroke-width="1.8" fill="none"/>
<rect x="379.2" y="878.2" width="5.6" height="5.6" fill="#1414ff"/>
<line x1="270.7" y1="697.9" x2="270.7" y2="718.2" stroke="#f0f000" stroke-width="1.8"/>
<line x1="455.7" y1="697.9" x2="455.7" y2="718.2" stroke="#f0f000" stroke-width="1.8"/>
<polyline points="243.7,753.3 252.5,753.3 252.5,735.4 288.59999999999997,735.4 288.59999999999997,753.3 297.9,753.3" stroke="#a4a4a4" stroke-width="1.6" fill="none"/>
<line x1="253.2" y1="730.0" x2="288.59999999999997" y2="730.0" stroke="#a4a4a4" stroke-width="1.6"/>
<circle cx="270.7" cy="724.4" r="5.6" fill="none" stroke="#a4a4a4" stroke-width="1.6"/>
<line x1="270.7" y1="743.9" x2="270.7" y2="771.0" stroke="#a4a4a4" stroke-width="1.6"/>
<polyline points="265.3,748.1999999999999 270.7,761.6999999999999 276.09999999999997,748.1999999999999" stroke="#a4a4a4" stroke-width="1.6" fill="none"/>
<polyline points="243.7,881 252.5,881 252.5,863.1 288.59999999999997,863.1 288.59999999999997,881 297.9,881" stroke="#10e8f0" stroke-width="1.6" fill="none"/>
<line x1="253.2" y1="857.7" x2="288.59999999999997" y2="857.7" stroke="#10e8f0" stroke-width="1.6"/>
<circle cx="270.7" cy="852.1" r="5.6" fill="none" stroke="#10e8f0" stroke-width="1.6"/>
<line x1="270.7" y1="871.6" x2="270.7" y2="898.7" stroke="#10e8f0" stroke-width="1.6"/>
<polyline points="265.3,875.9 270.7,889.4 276.09999999999997,875.9" stroke="#10e8f0" stroke-width="1.6" fill="none"/>
<polyline points="428.7,753.3 437.5,753.3 437.5,735.4 473.59999999999997,735.4 473.59999999999997,753.3 482.9,753.3" stroke="#e822e8" stroke-width="1.6" fill="none"/>
<line x1="438.2" y1="730.0" x2="473.59999999999997" y2="730.0" stroke="#e822e8" stroke-width="1.6"/>
<circle cx="455.7" cy="724.4" r="5.6" fill="none" stroke="#e822e8" stroke-width="1.6"/>
<line x1="455.7" y1="743.9" x2="455.7" y2="771.0" stroke="#e822e8" stroke-width="1.6"/>
<polyline points="450.3,748.1999999999999 455.7,761.6999999999999 461.09999999999997,748.1999999999999" stroke="#e822e8" stroke-width="1.6" fill="none"/>
<polyline points="428.7,881 437.5,881 437.5,863.1 473.59999999999997,863.1 473.59999999999997,881 482.9,881" stroke="#8c8cff" stroke-width="1.6" fill="none"/>
<line x1="438.2" y1="857.7" x2="473.59999999999997" y2="857.7" stroke="#8c8cff" stroke-width="1.6"/>
<circle cx="455.7" cy="852.1" r="5.6" fill="none" stroke="#8c8cff" stroke-width="1.6"/>
<line x1="455.7" y1="871.6" x2="455.7" y2="898.7" stroke="#8c8cff" stroke-width="1.6"/>
<polyline points="450.3,875.9 455.7,889.4 461.09999999999997,875.9" stroke="#8c8cff" stroke-width="1.6" fill="none"/>
<path d="M123.3 740.6 L149 740.6 L162 753.3 L149 765.9 L123.3 765.9 Z" stroke="#22a822" stroke-width="1.8" fill="none"/>
<path d="M602.2 740.6 L628 740.6 L641.4 753.3 L628 765.9 L602.2 765.9 Z" stroke="#22a822" stroke-width="1.8" fill="none"/>
<text x="40.9" y="760" fill="#f0f000" font-size="20" textLength="70.5" lengthAdjust="spacingAndGlyphs">BREAK</text>
<text x="164.2" y="747.6" fill="#f27a7a" font-size="20" textLength="59.8" lengthAdjust="spacingAndGlyphs">VDDH</text>
<text x="234.6" y="692" fill="#f0f000" font-size="20" textLength="31.4" lengthAdjust="spacingAndGlyphs">IN4</text>
<text x="419.5" y="692" fill="#f0f000" font-size="20" textLength="29" lengthAdjust="spacingAndGlyphs">IN1</text>
<text x="298.5" y="741.2" fill="#a4a4a4" font-size="20" textLength="68" lengthAdjust="spacingAndGlyphs">X0/M1</text>
<text x="340.5" y="747.6" fill="#10e8f0" font-size="20" textLength="75" lengthAdjust="spacingAndGlyphs">X0/INT1</text>
<text x="483.3" y="741.2" fill="#e822e8" font-size="20" textLength="65.2" lengthAdjust="spacingAndGlyphs">X0/M0</text>
<text x="550" y="747" fill="#10e010" font-size="20" textLength="24.6" lengthAdjust="spacingAndGlyphs">N1</text>
<text x="650" y="760" fill="#f0f000" font-size="20" textLength="67.4" lengthAdjust="spacingAndGlyphs">START</text>
<text x="340.5" y="820.4" fill="#1414ff" font-size="20" textLength="76.1" lengthAdjust="spacingAndGlyphs">X0/INT2</text>
<text x="298.5" y="869.4" fill="#a8f0f0" font-size="20" textLength="66.1" lengthAdjust="spacingAndGlyphs">X0/M3</text>
<text x="483.3" y="869.4" fill="#8c8cff" font-size="20" textLength="65.2" lengthAdjust="spacingAndGlyphs">X0/M2</text>
<line x1="578.9" y1="819" x2="739.4" y2="819" stroke="#fff" stroke-width="2" stroke-dasharray="16 6"/>
<line x1="573.9" y1="820.5" x2="573.9" y2="924.5" stroke="#fff" stroke-width="2" stroke-dasharray="16 6"/>
<line x1="581.9" y1="924.5" x2="739.4" y2="924.5" stroke="#fff" stroke-width="2" stroke-dasharray="16 6"/>
<line x1="739.4" y1="823" x2="739.4" y2="924.5" stroke="#fff" stroke-width="2" stroke-dasharray="16 6"/>
<text x="590.6" y="862.5" fill="#fff" font-size="36" textLength="122.7" lengthAdjust="spacingAndGlyphs">Voltage</text>
<text x="590.8" y="907.4" fill="#fff" font-size="36" textLength="88" lengthAdjust="spacingAndGlyphs">Trace</text>
<rect x="339" y="733" width="76" height="15.5" fill="#000"/>
<text x="340.5" y="747.6" fill="#10e8f0" font-size="20" textLength="75" lengthAdjust="spacingAndGlyphs">X0/INT1</text>
<rect x="740" y="543.8" width="780" height="421.2" fill="#000"/>
<text x="1117" y="553" fill="#9fd3d3" font-size="14" textLength="15" lengthAdjust="spacingAndGlyphs">top</text>
<line x1="758.9" y1="556.7" x2="1491.7" y2="556.7" stroke="#16aec6" stroke-width="1.5" stroke-dasharray="7 3.5"/>
<line x1="758.9" y1="556.7" x2="758.9" y2="922" stroke="#16aec6" stroke-width="1.5" stroke-dasharray="7 3.5"/>
<line x1="1491.7" y1="556.7" x2="1491.7" y2="922" stroke="#16aec6" stroke-width="1.5" stroke-dasharray="7 3.5"/>
<rect x="832.5" y="599.5" width="328.9" height="288.5" fill="#232323" stroke="#16aec6" stroke-width="1.6"/>
<text x="990" y="597" fill="#9cd0d0" font-size="12" textLength="13" lengthAdjust="spacingAndGlyphs">X0</text>
<text x="975" y="898.5" fill="#16aec6" font-size="12" textLength="44" lengthAdjust="spacingAndGlyphs">block_hv</text>
<text x="786.6" y="575.5" fill="#f28484" font-size="12" textLength="23.4" lengthAdjust="spacingAndGlyphs">vddH</text>
<line x1="788.7" y1="577.9" x2="806.8" y2="577.9" stroke="#f28484" stroke-width="3"/>
<line x1="798.5" y1="577.9" x2="798.5" y2="651" stroke="#f28484" stroke-width="3"/>
<line x1="798.5" y1="662" x2="798.5" y2="685" stroke="#f28484" stroke-width="3"/>
<line x1="798.5" y1="697" x2="798.5" y2="725.7" stroke="#f28484" stroke-width="3"/>
<text x="786" y="735.5" fill="#f28484" font-size="12" textLength="22" lengthAdjust="spacingAndGlyphs">vddH</text>
<line x1="747.4" y1="662.8" x2="769" y2="662.8" stroke="#16aec6" stroke-width="1.8" stroke-dasharray="3 3 6 2"/>
<line x1="769" y1="662.8" x2="822.8" y2="662.8" stroke="#c4b400" stroke-width="1.7"/>
<line x1="822.8" y1="662.8" x2="843" y2="662.8" stroke="#16aec6" stroke-width="1.6"/>
<text x="744" y="659.3" fill="#16aec6" font-size="12" textLength="13.5" lengthAdjust="spacingAndGlyphs">in4</text>
<text x="789.5" y="659.3" fill="#c4b400" font-size="12" textLength="13.5" lengthAdjust="spacingAndGlyphs">in4</text>
<line x1="747.4" y1="697" x2="769" y2="697" stroke="#16aec6" stroke-width="1.8" stroke-dasharray="3 3 6 2"/>
<line x1="769" y1="697" x2="822.8" y2="697" stroke="#c4b400" stroke-width="1.7"/>
<line x1="822.8" y1="697" x2="843" y2="697" stroke="#16aec6" stroke-width="1.6"/>
<text x="744" y="693.5" fill="#16aec6" font-size="12" textLength="13.5" lengthAdjust="spacingAndGlyphs">in1</text>
<text x="789.5" y="693.5" fill="#c4b400" font-size="12" textLength="13.5" lengthAdjust="spacingAndGlyphs">in1</text>
<line x1="843" y1="662.8" x2="940" y2="662.8" stroke="#c4b400" stroke-width="1.7"/>
<line x1="843" y1="697" x2="940.5" y2="697" stroke="#c4b400" stroke-width="1.7"/>
<text x="816.5" y="659.3" fill="#16aec6" font-size="12" textLength="13.5" lengthAdjust="spacingAndGlyphs">in2</text>
<text x="822" y="693.5" fill="#16aec6" font-size="12" textLength="9.5" lengthAdjust="spacingAndGlyphs">in</text>
<rect x="866.3" y="647.8" width="17.200000000000045" height="13.5" fill="#000"/>
<text x="867.8" y="659.3" fill="#c4b400" font-size="12" textLength="14.2" lengthAdjust="spacingAndGlyphs">in2</text>
<rect x="878.5" y="682.0" width="12" height="13.5" fill="#000"/>
<text x="880" y="693.5" fill="#c4b400" font-size="12" textLength="9" lengthAdjust="spacingAndGlyphs">in</text>
<rect x="883" y="695" width="4.5" height="4.5" fill="#e8d800"/>
<polyline points="885.2,697 885.2,731.3 941,731.3" stroke="#c4b400" stroke-width="1.7" fill="none"/>
<text x="814" y="735.5" fill="#f28484" font-size="12" textLength="17" lengthAdjust="spacingAndGlyphs">vdd</text>
<line x1="797.3" y1="739.3" x2="842.6" y2="739.3" stroke="#f28484" stroke-width="3"/>
<text x="814" y="760.5" fill="#16aec6" font-size="12" textLength="17" lengthAdjust="spacingAndGlyphs">vss</text>
<line x1="823.4" y1="764" x2="842.6" y2="764" stroke="#16aec6" stroke-width="1.6"/>
<text x="949.7" y="625.4" fill="#f28484" font-size="12" textLength="15.5" lengthAdjust="spacingAndGlyphs">vdd</text>
<line x1="948.9" y1="628.6" x2="966.8" y2="628.6" stroke="#f28484" stroke-width="3"/>
<line x1="958.2" y1="628.6" x2="958.2" y2="646" stroke="#f28484" stroke-width="3"/>
<polyline points="958.2,645.7 996.5,645.7 996.5,697 967.3,697" stroke="#f28484" stroke-width="3" fill="none"/>
<polyline points="985.8,645.7 985.8,663 966.6,663" stroke="#f28484" stroke-width="3" fill="none"/>
<rect x="955" y="642.5" width="6.5" height="6.5" fill="#f28484"/>
<rect x="982.6" y="642.5" width="6.5" height="6.5" fill="#f28484"/>
<polyline points="958.2,648 958.2,653.6 947.5,653.6 947.5,670.9 958.2,670.9 958.2,674.6" stroke="#9c9c9c" stroke-width="3" fill="none"/>
<line x1="945.2" y1="654" x2="945.2" y2="670.5" stroke="#9c9c9c" stroke-width="2.5"/>
<circle cx="942.5" cy="663" r="3" fill="none" stroke="#9c9c9c" stroke-width="2.2"/>
<line x1="958" y1="663" x2="966.6" y2="663" stroke="#9c9c9c" stroke-width="2.5"/>
<path d="M952.5 663 L959 659 L959 667 Z" stroke="none" stroke-width="1" fill="#9c9c9c"/>
<text x="961" y="657.4" fill="#9c9c9c" font-size="12" textLength="13.6" lengthAdjust="spacingAndGlyphs">M1</text>
<line x1="958.2" y1="674.6" x2="958.2" y2="684" stroke="#12f0f0" stroke-width="3"/>
<rect x="939.1" y="670.0" width="17.899999999999977" height="13.5" fill="#000"/>
<text x="940.6" y="681.5" fill="#10f0f0" font-size="12" textLength="14.9" lengthAdjust="spacingAndGlyphs">int1</text>
<polyline points="958.7,683.4 958.7,687.4 947.3,687.4 947.3,705.7 958.7,705.7 958.7,711" stroke="#ee18ee" stroke-width="3" fill="none"/>
<line x1="944.8" y1="688" x2="944.8" y2="705" stroke="#ee18ee" stroke-width="2.5"/>
<circle cx="942.5" cy="697.1" r="3" fill="none" stroke="#ee18ee" stroke-width="2.4"/>
<line x1="958" y1="697.1" x2="967.3" y2="697.1" stroke="#ee18ee" stroke-width="2.5"/>
<path d="M953.6 697.1 L960 693 L960 701.2 Z" stroke="none" stroke-width="1" fill="#ee18ee"/>
<text x="961" y="692" fill="#ee18ee" font-size="12" textLength="14.8" lengthAdjust="spacingAndGlyphs">M0</text>
<line x1="958.7" y1="713.1" x2="1298.8" y2="713.1" stroke="#12e812" stroke-width="3.5"/>
<circle cx="958.7" cy="713.1" r="4" fill="#12e812"/>
<rect x="1038.5" y="709.8" width="7" height="7" fill="#12e812"/>
<polyline points="1041.9,713.1 1041.9,879.8 937.5,879.8 937.5,860" stroke="#12e812" stroke-width="3.5" fill="none"/>
<rect x="1079.0" y="699.0" width="17.5" height="13.5" fill="#000"/>
<text x="1080.5" y="710.5" fill="#12e812" font-size="12" textLength="14.5" lengthAdjust="spacingAndGlyphs">out</text>
<rect x="1160.5" y="699.0" width="18" height="13.5" fill="#000"/>
<text x="1162" y="710.5" fill="#12e812" font-size="12" textLength="15" lengthAdjust="spacingAndGlyphs">out</text>
<polyline points="958.7,716 958.7,721.6 949,721.6 949,739.9 958.7,739.9 958.7,744" stroke="#16aec6" stroke-width="1.6" fill="none"/>
<line x1="946.7" y1="722.2" x2="946.7" y2="739.9" stroke="#16aec6" stroke-width="1.6"/>
<line x1="941" y1="731.3" x2="946.7" y2="731.3" stroke="#16aec6" stroke-width="1.6"/>
<line x1="949" y1="731.3" x2="966.7" y2="731.3" stroke="#16aec6" stroke-width="1.6"/>
<polyline points="960,727 954,731.3 960,735.6" stroke="#16aec6" stroke-width="1.6" fill="none"/>
<polyline points="966.7,731.3 982.1,731.3 982.1,748.4 958.7,748.4" stroke="#c4b400" stroke-width="1.7" fill="none"/>
<rect x="955.7" y="745.4" width="6" height="6" fill="#e8d800"/>
<line x1="958.7" y1="748.4" x2="958.7" y2="761.2" stroke="#c4b400" stroke-width="1.7"/>
<line x1="949" y1="761.2" x2="966.7" y2="761.2" stroke="#16aec6" stroke-width="1.6"/>
<line x1="952.7" y1="764.6" x2="962.8" y2="764.6" stroke="#16aec6" stroke-width="1.6"/>
<line x1="956.4" y1="768" x2="960" y2="768" stroke="#16aec6" stroke-width="1.6"/>
<text x="950.2" y="777.5" fill="#16aec6" font-size="12" textLength="15.0" lengthAdjust="spacingAndGlyphs">vss</text>
<text x="961" y="726.5" fill="#b0e0e0" font-size="12" textLength="14.5" lengthAdjust="spacingAndGlyphs">M4</text>
<text x="1051" y="754" fill="#f28484" font-size="12" textLength="16" lengthAdjust="spacingAndGlyphs">vdd</text>
<line x1="1050" y1="756.7" x2="1067.8" y2="756.7" stroke="#f28484" stroke-width="3"/>
<polyline points="1059.2,756.7 1059.2,838 1089.3,838 1089.3,828.8" stroke="#f28484" stroke-width="3" fill="none"/>
<polyline points="1059.2,794.5 1089.3,794.5 1089.3,803" stroke="#f28484" stroke-width="3" fill="none"/>
<rect x="1056" y="791.3" width="6.4" height="6.4" fill="#f28484"/>
<circle cx="1089.3" cy="806" r="3" fill="none" stroke="#16aec6" stroke-width="1.5"/>
<line x1="1077" y1="809.3" x2="1101" y2="809.3" stroke="#16aec6" stroke-width="1.6"/>
<polyline points="1076.4,819.7 1079.8,819.7 1079.8,813 1098.7,813 1098.7,819.7 1101,819.7" stroke="#16aec6" stroke-width="1.6" fill="none"/>
<line x1="1089.3" y1="815.5" x2="1089.3" y2="828.8" stroke="#16aec6" stroke-width="1.5"/>
<polyline points="1086.5,820 1089.3,824 1092,820" stroke="#16aec6" stroke-width="1.2" fill="none"/>
<line x1="1101" y1="819.7" x2="1135" y2="819.7" stroke="#f28484" stroke-width="3"/>
<text x="1101.6" y="815" fill="#b0e0e0" font-size="12" textLength="14.9" lengthAdjust="spacingAndGlyphs">M3</text>
<text x="1126" y="780" fill="#f28484" font-size="12" textLength="15" lengthAdjust="spacingAndGlyphs">vdd</text>
<line x1="1126" y1="782" x2="1143" y2="782" stroke="#f28484" stroke-width="3"/>
<line x1="1134.5" y1="782" x2="1134.5" y2="819.7" stroke="#f28484" stroke-width="3"/>
<rect x="1123.5" y="806.0" width="19" height="13.5" fill="#000"/>
<text x="1125" y="817.5" fill="#f28484" font-size="12" textLength="16" lengthAdjust="spacingAndGlyphs">vdd</text>
<text x="1016.3" y="804.5" fill="#f28484" font-size="12" textLength="15.7" lengthAdjust="spacingAndGlyphs">vdd</text>
<line x1="1015" y1="807.3" x2="1035" y2="807.3" stroke="#f28484" stroke-width="3"/>
<polyline points="1024.9,807.3 1024.9,849.4 941.8,849.4" stroke="#f28484" stroke-width="3" fill="none"/>
<line x1="937.5" y1="819.7" x2="1076.4" y2="819.7" stroke="#1a1aff" stroke-width="3.2"/>
<polyline points="937.5,819.7 937.5,832 912.3,832 912.3,849.4 921.8,849.4" stroke="#1a1aff" stroke-width="3.2" fill="none"/>
<circle cx="937.5" cy="832" r="3.8" fill="#1a1aff"/>
<rect x="1029.9" y="805.5" width="19.399999999999864" height="13.5" fill="#000008"/>
<text x="1031.4" y="817" fill="#1c1cf0" font-size="12" textLength="16.4" lengthAdjust="spacingAndGlyphs">int2</text>
<polyline points="937.5,836 937.5,839.7 930.4,839.7 930.4,856.9 937.5,856.9 937.5,860" stroke="#8c8cf8" stroke-width="3" fill="none"/>
<line x1="927.5" y1="840" x2="927.5" y2="857" stroke="#8c8cf8" stroke-width="2.5"/>
<circle cx="924.5" cy="849.4" r="3" fill="none" stroke="#8c8cf8" stroke-width="2.4"/>
<line x1="937" y1="849.4" x2="943" y2="849.4" stroke="#8c8cf8" stroke-width="2.5"/>
<path d="M934 849.4 L940 845.5 L940 853.3 Z" stroke="none" stroke-width="1" fill="#8c8cf8"/>
<text x="940.4" y="844.6" fill="#8c8cf8" font-size="12" textLength="15.6" lengthAdjust="spacingAndGlyphs">M2</text>
<rect x="1246.5" y="603.9" width="185.9" height="163.3" fill="#232323" stroke="#16aec6" stroke-width="1.6"/>
<text x="1332" y="600.6" fill="#9cd0d0" font-size="12" textLength="10.7" lengthAdjust="spacingAndGlyphs">X1</text>
<text x="1325.2" y="776.5" fill="#16aec6" font-size="12" textLength="26.4" lengthAdjust="spacingAndGlyphs">inv_lv</text>
<text x="1182.3" y="579" fill="#16aec6" font-size="12" textLength="21.7" lengthAdjust="spacingAndGlyphs">vddL</text>
<line x1="1183" y1="581.8" x2="1202" y2="581.8" stroke="#16aec6" stroke-width="1.6"/>
<line x1="1193.7" y1="582" x2="1193.7" y2="645.9" stroke="#c4b400" stroke-width="1.7"/>
<text x="1181" y="642.5" fill="#c4b400" font-size="12" textLength="21.5" lengthAdjust="spacingAndGlyphs">vddL</text>
<line x1="1193.7" y1="645.9" x2="1234.9" y2="645.9" stroke="#c4b400" stroke-width="1.7"/>
<line x1="1234.9" y1="645.9" x2="1255.1" y2="645.9" stroke="#16aec6" stroke-width="1.6"/>
<text x="1228" y="642.5" fill="#16aec6" font-size="12" textLength="15.8" lengthAdjust="spacingAndGlyphs">vdd</text>
<text x="1228" y="668" fill="#16aec6" font-size="12" textLength="15.8" lengthAdjust="spacingAndGlyphs">vss</text>
<line x1="1235.7" y1="671.2" x2="1255.1" y2="671.2" stroke="#16aec6" stroke-width="1.6"/>
<polyline points="1161,713.8 1298.8,713.8 1298.8,671.2 1344,671.2" stroke="#12e812" stroke-width="3.5" fill="none"/>
<line x1="1298.8" y1="705.7" x2="1344.6" y2="705.7" stroke="#12e812" stroke-width="3.5"/>
<rect x="1295.3" y="702.2" width="7" height="7" fill="#12e812"/>
<text x="1163" y="710.5" fill="#12e812" font-size="12" textLength="13.4" lengthAdjust="spacingAndGlyphs">out</text>
<rect x="1193.8" y="699.0" width="12.900000000000091" height="13.5" fill="#000"/>
<text x="1195.3" y="710.5" fill="#12e812" font-size="12" textLength="9.9" lengthAdjust="spacingAndGlyphs">n1</text>
<text x="1236.2" y="710.5" fill="#12e812" font-size="12" textLength="8.1" lengthAdjust="spacingAndGlyphs">in</text>
<rect x="1290.5" y="658.0" width="12.400000000000091" height="13.5" fill="#000"/>
<text x="1292" y="669.5" fill="#12e812" font-size="12" textLength="9.4" lengthAdjust="spacingAndGlyphs">in</text>
<text x="1353" y="634.3" fill="#16aec6" font-size="12" textLength="16" lengthAdjust="spacingAndGlyphs">vdd</text>
<line x1="1352" y1="637" x2="1369.6" y2="637" stroke="#16aec6" stroke-width="1.6"/>
<line x1="1361.5" y1="637" x2="1361.5" y2="655" stroke="#c4b400" stroke-width="1.7"/>
<polyline points="1361.5,655 1388.5,655 1388.5,671.5 1369.6,671.5" stroke="#c4b400" stroke-width="1.7" fill="none"/>
<rect x="1358.8" y="652.3" width="5.5" height="5.5" fill="#e8d800"/>
<polyline points="1361.5,657 1361.5,662.6 1352.6,662.6 1352.6,680.1 1361.5,680.1 1361.5,686" stroke="#16aec6" stroke-width="1.6" fill="none"/>
<line x1="1349.8" y1="663" x2="1349.8" y2="680" stroke="#16aec6" stroke-width="1.6"/>
<circle cx="1346.8" cy="671.2" r="2.8" fill="none" stroke="#16aec6" stroke-width="1.5"/>
<line x1="1352.6" y1="671.2" x2="1369.6" y2="671.2" stroke="#16aec6" stroke-width="1.6"/>
<polyline points="1360,667.5 1365,671.2 1360,675" stroke="#16aec6" stroke-width="1.5" fill="none"/>
<text x="1364.2" y="666.7" fill="#b0e0e0" font-size="12" textLength="14.8" lengthAdjust="spacingAndGlyphs">M0</text>
<line x1="1361.5" y1="688.2" x2="1422.2" y2="688.2" stroke="#c4b400" stroke-width="1.7"/>
<line x1="1422.2" y1="688.2" x2="1442.4" y2="688.2" stroke="#16aec6" stroke-width="1.6"/>
<line x1="1442.4" y1="688.2" x2="1480" y2="688.2" stroke="#c4b400" stroke-width="1.7"/>
<line x1="1480" y1="688.2" x2="1502" y2="688.2" stroke="#16aec6" stroke-width="1.8" stroke-dasharray="5 3"/>
<rect x="1358.8" y="685.5" width="5.5" height="5.5" fill="#e8d800"/>
<rect x="1399.1" y="674.0" width="18.600000000000136" height="13.5" fill="#000"/>
<text x="1400.6" y="685.5" fill="#c4b400" font-size="12" textLength="15.6" lengthAdjust="spacingAndGlyphs">out</text>
<text x="1434.3" y="685.5" fill="#16aec6" font-size="12" textLength="14.3" lengthAdjust="spacingAndGlyphs">out</text>
<text x="1452.4" y="685.5" fill="#c4b400" font-size="12" textLength="18.3" lengthAdjust="spacingAndGlyphs">out1</text>
<text x="1493.6" y="685.5" fill="#16aec6" font-size="12" textLength="17.5" lengthAdjust="spacingAndGlyphs">out1</text>
<polyline points="1361.5,691 1361.5,696.3 1350.8,696.3 1350.8,715.2 1361.5,715.2 1361.5,720" stroke="#f00000" stroke-width="3" fill="none"/>
<line x1="1347.5" y1="697" x2="1347.5" y2="715" stroke="#f00000" stroke-width="3"/>
<line x1="1344.6" y1="705.7" x2="1347.5" y2="705.7" stroke="#f00000" stroke-width="3"/>
<line x1="1351" y1="705.7" x2="1365.6" y2="705.7" stroke="#f00000" stroke-width="3"/>
<path d="M1354 705.7 L1361 701.5 L1361 709.9 Z" stroke="none" stroke-width="1" fill="#f00000"/>
<polyline points="1365.6,705.7 1384.4,705.7 1384.4,722.7 1361.5,722.7" stroke="#c4b400" stroke-width="1.7" fill="none"/>
<rect x="1358.8" y="720" width="5.5" height="5.5" fill="#e8d800"/>
<text x="1364.2" y="701.1" fill="#f00000" font-size="12" textLength="14.3" lengthAdjust="spacingAndGlyphs">M1</text>
<line x1="1361.5" y1="722.7" x2="1361.5" y2="735.4" stroke="#c4b400" stroke-width="1.7"/>
<line x1="1352" y1="735.4" x2="1369.6" y2="735.4" stroke="#16aec6" stroke-width="1.6"/>
<line x1="1355.5" y1="739.5" x2="1366" y2="739.5" stroke="#16aec6" stroke-width="1.6"/>
<line x1="1359.5" y1="743.5" x2="1363" y2="743.5" stroke="#16aec6" stroke-width="1.6"/>
<text x="1352" y="752.9" fill="#16aec6" font-size="12" textLength="17" lengthAdjust="spacingAndGlyphs">vss</text>
<line x1="1194.7" y1="821" x2="1515.6" y2="821" stroke="#fff" stroke-width="2" stroke-dasharray="16 6"/>
<line x1="1189.7" y1="822.5" x2="1189.7" y2="882" stroke="#fff" stroke-width="2" stroke-dasharray="16 6"/>
<line x1="1197.7" y1="882" x2="1515.6" y2="882" stroke="#fff" stroke-width="2" stroke-dasharray="16 6"/>
<line x1="1515.6" y1="825" x2="1515.6" y2="882" stroke="#fff" stroke-width="2" stroke-dasharray="16 6"/>
<text x="1205" y="866.5" fill="#fff" font-size="40" textLength="293" lengthAdjust="spacingAndGlyphs">Schematic Viewer</text>
<g fill="none" stroke="#c80000" stroke-width="5.8"><line x1="963" y1="460.5" x2="1486" y2="460.5" stroke-dasharray="23.5 18.5" stroke-dashoffset="24"/><line x1="963" y1="527.7" x2="1486" y2="527.7" stroke-dasharray="23.5 18.5" stroke-dashoffset="24"/><path d="M963 460.5 A14 13 0 0 0 949 473.5 L949 479"/><path d="M949 494 L949 514.7 A14 13 0 0 0 963 527.7"/><path d="M1485 460.5 L1498 460.5 A12 7 0 0 1 1510 467.5"/><path d="M1510 483 L1510 507"/><path d="M1510 520.7 A12 7 0 0 1 1498 527.7 L1486 527.7"/></g>
<g>
<line x1="757" y1="351.8" x2="938" y2="376.2" stroke="#b80c0c" stroke-width="6.5"/>
<line x1="757" y1="350.2" x2="938" y2="374.6" stroke="#e02828" stroke-width="2"/>
<path d="M742.4 349 L760.9 342.1 L756.6 351.5 L758.7 359.9 Z" fill="#c01010"/>
<path d="M742.4 349 L760.9 342.1 L756.6 351.5 Z" fill="#e03030"/>
<ellipse cx="958" cy="383.4" rx="19.3" ry="21" fill="none" stroke="#c00000" stroke-width="5.8"/>
<ellipse cx="958" cy="383.4" rx="17" ry="18.7" fill="none" stroke="#6a0000" stroke-width="1.2" opacity="0.8"/>
</g>
<g>
<ellipse cx="1422.3" cy="73.1" rx="45.6" ry="32.9" fill="#5a5a5a"/>
<ellipse cx="1422.3" cy="72.1" rx="45" ry="32.3" fill="#e6e6e6"/>
<ellipse cx="1422.3" cy="72.1" rx="43.4" ry="30.8" fill="url(#bg1)"/>
<path d="M1386.59 80.65 A38 25 0 0 1 1453.43 57.76" fill="none" stroke="url(#hlh)" stroke-width="5" stroke-linecap="round"/>

<path d="M1420.2 59.9 L1427.8 59.9 L1427.8 82.9 L1433.0 82.9 L1433.0 88.1 L1413.8 88.1 L1413.8 82.9 L1419.8 82.9 L1419.8 68.7 L1413.8 70.7 L1413.8 64.7 Z" fill="#1a1a50" opacity="0.7"/><path d="M1419.0 58.7 L1426.6 58.7 L1426.6 81.7 L1431.8 81.7 L1431.8 86.9 L1412.6 86.9 L1412.6 81.7 L1418.6 81.7 L1418.6 67.5 L1412.6 69.5 L1412.6 63.5 Z" fill="#fff"/></g>
<g>
<ellipse cx="283.7" cy="113.9" rx="45.6" ry="32.9" fill="#5a5a5a"/>
<ellipse cx="283.7" cy="112.9" rx="45" ry="32.3" fill="#e6e6e6"/>
<ellipse cx="283.7" cy="112.9" rx="43.4" ry="30.8" fill="url(#bg1)"/>
<path d="M247.99 121.45 A38 25 0 0 1 314.83 98.56" fill="none" stroke="url(#hlh)" stroke-width="5" stroke-linecap="round"/>

<text x="284.9" y="129.1" fill="#1a1a50" font-size="40" font-weight="bold" text-anchor="middle" opacity="0.7" stroke="#1a1a50" stroke-width="1">2</text>
<text x="283.7" y="127.9" fill="#fff" font-size="40" font-weight="bold" text-anchor="middle" stroke="#fff" stroke-width="1">2</text>
</g>
<g>
<ellipse cx="559" cy="426" rx="45.6" ry="32.9" fill="#5a5a5a"/>
<ellipse cx="559" cy="425" rx="45" ry="32.3" fill="#e6e6e6"/>
<ellipse cx="559" cy="425" rx="43.4" ry="30.8" fill="url(#bg1)"/>
<path d="M523.29 433.55 A38 25 0 0 1 590.13 410.66" fill="none" stroke="url(#hlh)" stroke-width="5" stroke-linecap="round"/>

<text x="560.2" y="441.2" fill="#1a1a50" font-size="40" font-weight="bold" text-anchor="middle" opacity="0.7" stroke="#1a1a50" stroke-width="1">3</text>
<text x="559" y="440" fill="#fff" font-size="40" font-weight="bold" text-anchor="middle" stroke="#fff" stroke-width="1">3</text>
</g>
<g>
<ellipse cx="97" cy="883" rx="45.6" ry="32.9" fill="#5a5a5a"/>
<ellipse cx="97" cy="882" rx="45" ry="32.3" fill="#e6e6e6"/>
<ellipse cx="97" cy="882" rx="43.4" ry="30.8" fill="url(#bg1)"/>
<path d="M61.29 890.55 A38 25 0 0 1 128.13 867.66" fill="none" stroke="url(#hlh)" stroke-width="5" stroke-linecap="round"/>

<text x="98.2" y="898.2" fill="#1a1a50" font-size="40" font-weight="bold" text-anchor="middle" opacity="0.7" stroke="#1a1a50" stroke-width="1">4</text>
<text x="97" y="897" fill="#fff" font-size="40" font-weight="bold" text-anchor="middle" stroke="#fff" stroke-width="1">4</text>
</g>
<g>
<ellipse cx="808.7" cy="876.3" rx="45.6" ry="32.9" fill="#5a5a5a"/>
<ellipse cx="808.7" cy="875.3" rx="45" ry="32.3" fill="#e6e6e6"/>
<ellipse cx="808.7" cy="875.3" rx="43.4" ry="30.8" fill="url(#bg1)"/>
<path d="M772.99 883.85 A38 25 0 0 1 839.83 860.96" fill="none" stroke="url(#hlh)" stroke-width="5" stroke-linecap="round"/>

<text x="809.9000000000001" y="891.5" fill="#1a1a50" font-size="40" font-weight="bold" text-anchor="middle" opacity="0.7" stroke="#1a1a50" stroke-width="1">5</text>
<text x="808.7" y="890.3" fill="#fff" font-size="40" font-weight="bold" text-anchor="middle" stroke="#fff" stroke-width="1">5</text>
</g>
</svg>
</body></html>
